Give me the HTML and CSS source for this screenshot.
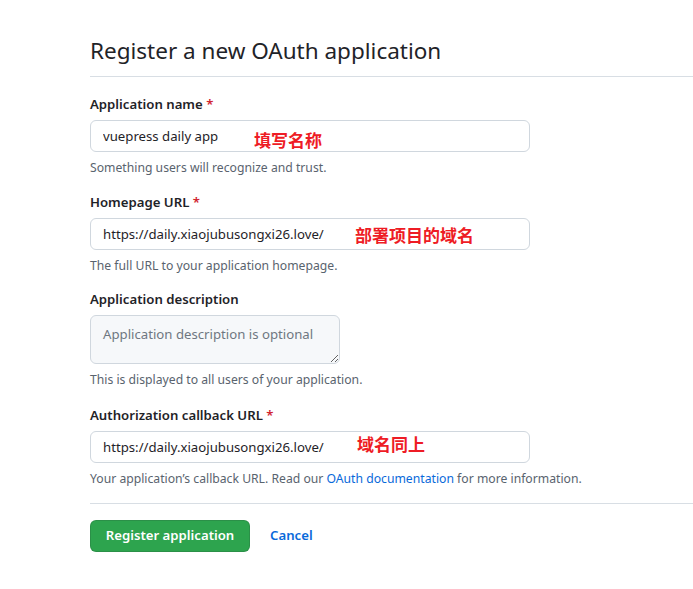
FILE: index.html
```html
<!DOCTYPE html>
<html lang="en">
<head>
<meta charset="utf-8">
<title>Register a new OAuth application</title>
<link rel="stylesheet" href="styles.css">
</head>
<body>
<main class="page">
  <h1 class="title">Register a new OAuth application</h1>
  <form class="form">
    <div class="group">
      <label class="label">Application name <span class="req">*</span></label>
      <div class="field">
        <input class="input" type="text" value="vuepress daily app">
        <span class="note note-1">填写名称</span>
      </div>
      <p class="hint">Something users will recognize and trust.</p>
    </div>
    <div class="group">
      <label class="label">Homepage URL <span class="req">*</span></label>
      <div class="field">
        <input class="input" type="text" value="https://daily.xiaojubusongxi26.love/">
        <span class="note note-2">部署项目的域名</span>
      </div>
      <p class="hint">The full URL to your application homepage.</p>
    </div>
    <div class="group group-tight">
      <label class="label">Application description</label>
      <div class="field">
        <textarea class="textarea" placeholder="Application description is optional"></textarea>
      </div>
      <p class="hint">This is displayed to all users of your application.</p>
    </div>
    <div class="group">
      <label class="label">Authorization callback URL <span class="req">*</span></label>
      <div class="field">
        <input class="input" type="text" value="https://daily.xiaojubusongxi26.love/">
        <span class="note note-3">域名同上</span>
      </div>
      <p class="hint">Your application’s callback URL. Read our <a class="link" href="#">OAuth documentation</a> for more information.</p>
    </div>
    <div class="actions">
      <button class="btn" type="button">Register application</button>
      <a class="cancel" href="#">Cancel</a>
    </div>
  </form>
</main>
</body>
</html>
```

FILE: styles.css
```css
* { box-sizing: border-box; }
html, body { margin: 0; padding: 0; background: #fff; }
body {
  font-family: "Noto Sans", "Open Sans", "Liberation Sans", sans-serif;
  color: #1f2328;
  font-size: 13.2px;
  line-height: 1.5;
}
.page {
  padding: 33px 0 0 90px;
}
.title {
  margin: 0;
  font-size: 22.5px;
  font-weight: 400;
  line-height: 36px;
  padding-bottom: 7px;
  border-bottom: 1px solid #d8dee4;
}
.form { padding-top: 17px; }
.group { margin-bottom: 15px; }
.label {
  display: block;
  font-size: 13.2px;
  font-weight: 600;
  line-height: 21px;
  margin-bottom: 5px;
}
.group-tight { margin-top: -1px; margin-bottom: 16px; }
.req { color: #d1242f; }
.field { position: relative; }
.input {
  display: block;
  width: 440px;
  height: 32px;
  padding: 0 12px;
  border: 1px solid #d0d7de;
  border-radius: 6px;
  font: inherit;
  font-size: 13.2px;
  color: #1f2328;
  background: #fff;
  outline: none;
}
.textarea {
  display: block;
  width: 250px;
  height: 49px;
  padding: 8px 12px 6px;
  border: 1px solid #d0d7de;
  border-radius: 6px;
  background: #f6f8fa;
  font: inherit;
  font-size: 13.2px;
  line-height: 20px;
  color: #1f2328;
  outline: none;
  resize: vertical;
}
.textarea::placeholder { color: #6e7781; }
.hint {
  margin: 7px 0 0;
  font-size: 12.2px;
  line-height: 18px;
  color: #59636e;
}
.link { color: #0969da; text-decoration: none; }
.note {
  position: absolute;
  font-family: "Noto Sans CJK SC", sans-serif;
  font-weight: 700;
  font-size: 17px;
  line-height: 17px;
  color: #ee1c25;
  white-space: nowrap;
}
.note-1 { left: 164px; top: 11px; }
.note-2 { left: 265px; top: 8px; }
.note-3 { left: 267px; top: 4px; }
.actions {
  display: flex;
  align-items: center;
  gap: 20px;
  border-top: 1px solid #d8dee4;
  padding-top: 16px;
  margin-top: 14px;
}
.btn {
  width: 160px;
  height: 32px;
  background: #2da44e;
  color: #fff;
  border: 1px solid rgba(31,35,40,0.15);
  border-radius: 6px;
  font: inherit;
  font-size: 13.2px;
  font-weight: 600;
  cursor: pointer;
}
.cancel {
  color: #0969da;
  font-weight: 600;
  text-decoration: none;
  font-size: 13.2px;
}
```
